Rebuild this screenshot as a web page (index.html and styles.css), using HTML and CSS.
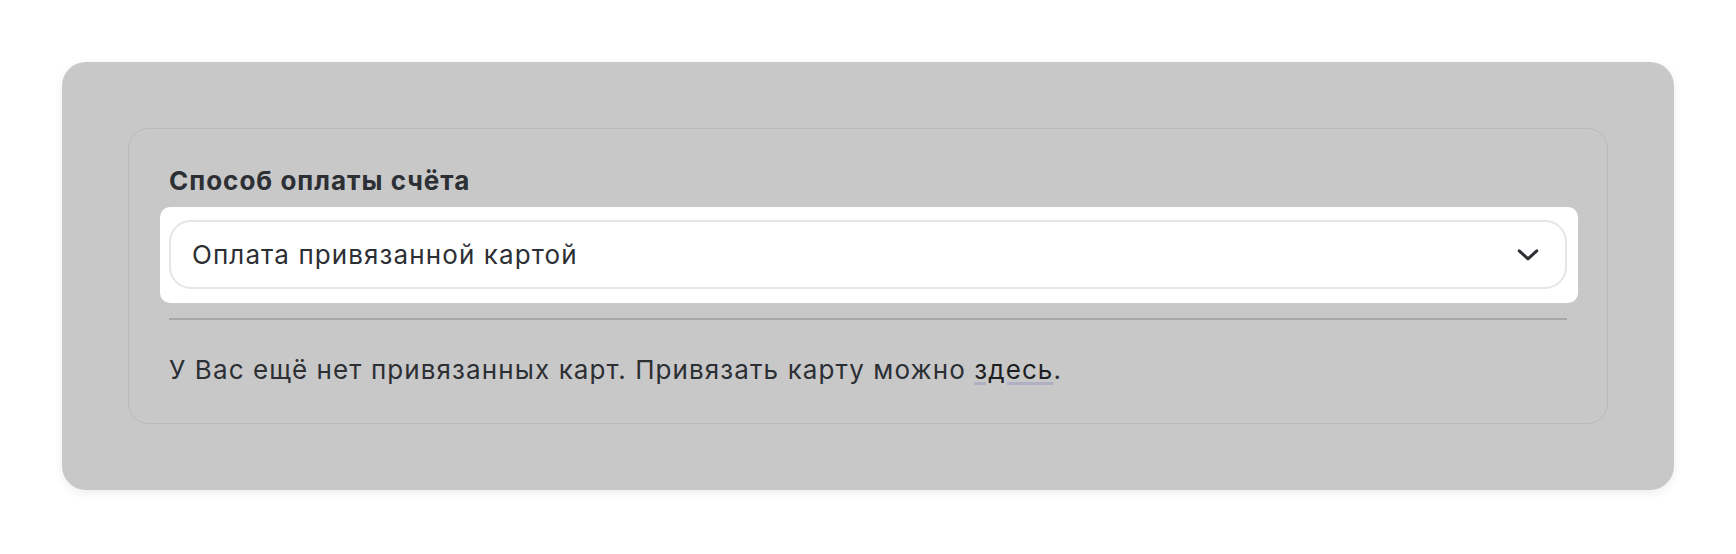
FILE: index.html
```html
<!DOCTYPE html>
<html lang="ru">
<head>
<meta charset="utf-8">
<title>Способ оплаты</title>
<link rel="stylesheet" href="styles.css">
</head>
<body>
<div class="card">
  <div class="panel">
    <div class="label">Способ оплаты счёта</div>
    <div class="select-wrap">
      <div class="select">
        <span class="select-value">Оплата привязанной картой</span>
        <svg class="chevron" width="22" height="12" viewBox="0 0 22 12"><path d="M2.2 1.8 L11 9.8 L19.8 1.8" fill="none" stroke="#2c2f34" stroke-width="3" stroke-linecap="round" stroke-linejoin="round"/></svg>
      </div>
    </div>
    <div class="divider"></div>
    <p class="note">У Вас ещё нет привязанных карт. Привязать карту можно <a class="link" href="#">здесь</a>.</p>
  </div>
</div>
</body>
</html>
```
FILE: styles.css
```css
* { box-sizing: border-box; }
html, body { margin: 0; padding: 0; background: #ffffff; }
body {
  padding: 62px;
  font-family: Inter, "Noto Sans", sans-serif;
  color: #2c2f34;
}
.card {
  background: #c8c8c8;
  border-radius: 24px;
  padding: 66px;
  box-shadow: 0 3px 10px rgba(0, 0, 0, 0.07);
}
.panel {
  border: 1px solid #b8b8c1;
  border-radius: 20px;
  padding: 36px 40px 37px;
}
.label {
  font-size: 26px;
  line-height: 32px;
  font-weight: 700;
  letter-spacing: 1px;
  margin-bottom: 10px;
}
.select-wrap {
  background: #ffffff;
  border-radius: 10px;
  margin: 0 -11px 0 -9px;
  padding: 13px 11px 14px 9px;
}
.select {
  height: 69px;
  border: 2px solid #e5e5ea;
  border-radius: 22px;
  padding: 0 26px 0 21px;
  display: flex;
  align-items: center;
  justify-content: space-between;
}
.select-value {
  font-size: 26px;
  line-height: 32px;
  letter-spacing: 1.1px;
}
.chevron { display: block; }
.divider {
  height: 2px;
  background: #a7a7a9;
  margin-top: 15px;
}
.note {
  margin: 34px 0 0;
  font-size: 26px;
  line-height: 32px;
  letter-spacing: 1.1px;
}
.link {
  color: #1d1f23;
  text-decoration: underline;
  text-decoration-color: #b0b0c2;
  text-decoration-thickness: 3px;
  text-underline-offset: 3px;
  text-decoration-skip-ink: auto;
}
```
